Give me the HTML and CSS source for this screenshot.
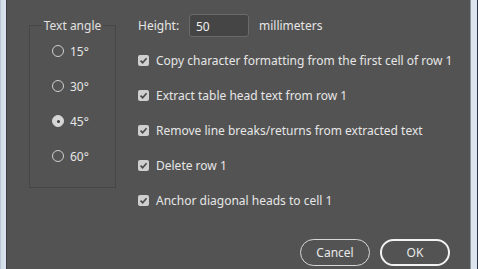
FILE: index.html
```html
<!DOCTYPE html>
<html lang="en">
<head>
  <meta charset="UTF-8" />
  <title>Table Heads Options</title>
  <link rel="stylesheet" href="styles.css">
</head>
<body>
  <div class="window">
    <div class="edge edge-left"></div>

    <div class="dialog">
      <fieldset class="angle-group">
        <legend>Text angle</legend>
        <div class="radios">
          <label class="radio"><span class="dot"></span>15°</label>
          <label class="radio"><span class="dot"></span>30°</label>
          <label class="radio"><span class="dot on"></span>45°</label>
          <label class="radio"><span class="dot"></span>60°</label>
        </div>
      </fieldset>

      <div class="options">
        <div class="height-row">
          <span class="height-label">Height:</span>
          <span class="field">50</span>
          <span class="unit">millimeters</span>
        </div>
        <label class="check"><span class="box"><svg viewBox="0 0 10 10"><path d="M2.3 5.2 L4.2 7 L7.8 3"/></svg></span>Copy character formatting from the first cell of row 1</label>
        <label class="check"><span class="box"><svg viewBox="0 0 10 10"><path d="M2.3 5.2 L4.2 7 L7.8 3"/></svg></span>Extract table head text from row 1</label>
        <label class="check"><span class="box"><svg viewBox="0 0 10 10"><path d="M2.3 5.2 L4.2 7 L7.8 3"/></svg></span>Remove line breaks/returns from extracted text</label>
        <label class="check"><span class="box"><svg viewBox="0 0 10 10"><path d="M2.3 5.2 L4.2 7 L7.8 3"/></svg></span>Delete row 1</label>
        <label class="check"><span class="box"><svg viewBox="0 0 10 10"><path d="M2.3 5.2 L4.2 7 L7.8 3"/></svg></span>Anchor diagonal heads to cell 1</label>
      </div>

      <div class="actions">
        <button class="btn">Cancel</button>
        <button class="btn primary">OK</button>
      </div>
    </div>

    <div class="edge edge-right"></div>
  </div>
</body>
</html>
```

FILE: styles.css
```css
* {
  box-sizing: border-box;
}

body {
  margin: 0;
  width: 478px;
  height: 269px;
  overflow: hidden;
  background: #535353;
  font-family: "Noto Sans", "Open Sans", sans-serif;
  font-size: 12px;
  color: #e6e6e6;
}

.window {
  display: flex;
  height: 269px;
}

.edge {
  flex: none;
}

.edge-left {
  width: 7px;
  background: linear-gradient(90deg, #9fb0c2 0, #d4dee9 1px, #dbe4ee 6px);
  border-right: 1px solid #3a3f45;
}

.edge-right {
  width: 8px;
  background: #dce5ee;
  border-left: 1px solid #8e969e;
  border-right: 1px solid #2a3442;
}

.dialog {
  flex: 1;
  min-width: 0;
  display: grid;
  grid-template-columns: 87px minmax(0, 1fr);
  grid-template-rows: 1fr auto;
  column-gap: 22px;
  padding: 0 20px 3px 22px;
}

/* text angle group */
.angle-group {
  margin: 17px 0 0;
  height: 171px;
  padding: 0;
  border: 1px solid #464646;
  min-width: 0;
}

.angle-group legend {
  margin: 0 auto;
  padding: 0 2px;
  color: #e0e0e0;
}

.radios {
  padding: 8px 0 0 22px;
  display: flex;
  flex-direction: column;
  gap: 17px;
}

.radio {
  display: flex;
  align-items: center;
  gap: 6px;
  height: 18px;
}

.dot {
  width: 12px;
  height: 12px;
  border: 1px solid #cfcfcf;
  border-radius: 50%;
}

.dot.on {
  background: #d6d6d6;
  border-color: #d6d6d6;
  position: relative;
}

.dot.on::after {
  content: "";
  position: absolute;
  left: 3.5px;
  top: 3.5px;
  width: 3px;
  height: 3px;
  border-radius: 50%;
  background: #3c3c3c;
}

/* right column */
.options {
  padding-top: 14px;
  display: flex;
  flex-direction: column;
  gap: 17px;
}

.height-row {
  display: flex;
  align-items: center;
  height: 23px;
  margin-bottom: -3px;
}

.height-label {
  width: 51px;
}

.field {
  width: 60px;
  height: 23px;
  padding: 3px 6px;
  background: #454545;
  border: 1px solid #6a6a6a;
  border-radius: 3px;
  color: #f0f0f0;
}

.unit {
  margin-left: 10px;
}

.check {
  display: flex;
  align-items: center;
  gap: 7px;
  height: 18px;
  white-space: nowrap;
}

.box {
  width: 11px;
  height: 11px;
  border-radius: 2px;
  background: #cfcfcf;
  display: flex;
}

.box svg {
  width: 11px;
  height: 11px;
  fill: none;
  stroke: #4a4a4a;
  stroke-width: 1.5;
}

/* buttons */
.actions {
  grid-column: 1 / 3;
  display: flex;
  justify-content: flex-end;
  gap: 10px;
}

.btn {
  width: 70px;
  height: 27px;
  border: 1px solid #d8d8d8;
  border-radius: 14px;
  background: transparent;
  color: #e8e8e8;
  font: inherit;
}

.btn.primary {
  border: 2px solid #f2f2f2;
}
```
